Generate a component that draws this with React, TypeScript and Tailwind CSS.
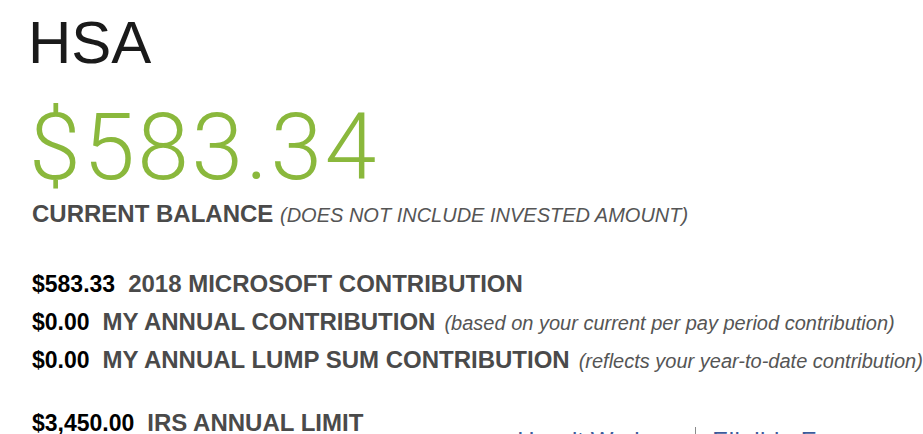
const rows = [
  { amount: "$583.33", label: "2018 MICROSOFT CONTRIBUTION", note: "" },
  {
    amount: "$0.00",
    label: "MY ANNUAL CONTRIBUTION",
    note: "(based on your current per pay period contribution)",
  },
  {
    amount: "$0.00",
    label: "MY ANNUAL LUMP SUM CONTRIBUTION",
    note: "(reflects your year-to-date contribution)",
  },
];

const sans = "font-['Liberation_Sans',Arial,sans-serif]";

const App = () => {
  return (
    <div className={`w-[923px] h-[434px] overflow-hidden bg-white ${sans}`}>
      <div className="pl-[32px] pt-[13px] whitespace-nowrap">
        <h1 className="-ml-[4px] text-[60px] leading-none text-[#1a1a1a]">HSA</h1>

        <div className="mt-[28px] -ml-[3px] text-[93px] leading-none tracking-[2.6px] text-[#8ab83c] font-['Roboto',sans-serif] font-light">
          $583.34
        </div>

        <div className="mt-[8px] text-[24px] leading-none font-bold text-[#4a4a4a]">
          CURRENT BALANCE{" "}
          <span className="text-[20px] font-normal italic text-[#555]">
            (DOES NOT INCLUDE INVESTED AMOUNT)
          </span>
        </div>

        {/* contribution rows */}
        <div className="mt-[40px] flex flex-col">
          {rows.map((row) => (
            <div key={row.label} className="flex items-baseline h-[38px]">
              <span className="text-[23px] font-bold text-black">{row.amount}</span>
              <span className="ml-[13px] text-[24px] font-bold text-[#4a4a4a]">{row.label}</span>
              {row.note && (
                <span className="ml-[9px] text-[20px] italic text-[#555]">{row.note}</span>
              )}
            </div>
          ))}
        </div>

        <div className="mt-[25px] flex items-start">
          <div className="flex items-baseline">
            <span className="text-[23px] font-bold text-black">$3,450.00</span>
            <span className="ml-[13px] text-[24px] font-bold text-[#4a4a4a]">IRS ANNUAL LIMIT</span>
          </div>
          <div className="ml-[154px] mt-[24px] flex items-start text-[24px] leading-none text-[#3d5b9b]">
            <a href="#">How it Works</a>
            <span className="ml-[37px] mr-[16px] -mt-[2px] h-[24px] w-px bg-[#8a8a8a]" />
            <a href="#" className="tracking-[0.5px]">Eligible Expenses</a>
          </div>
        </div>
      </div>
    </div>
  );
};

export default App;
